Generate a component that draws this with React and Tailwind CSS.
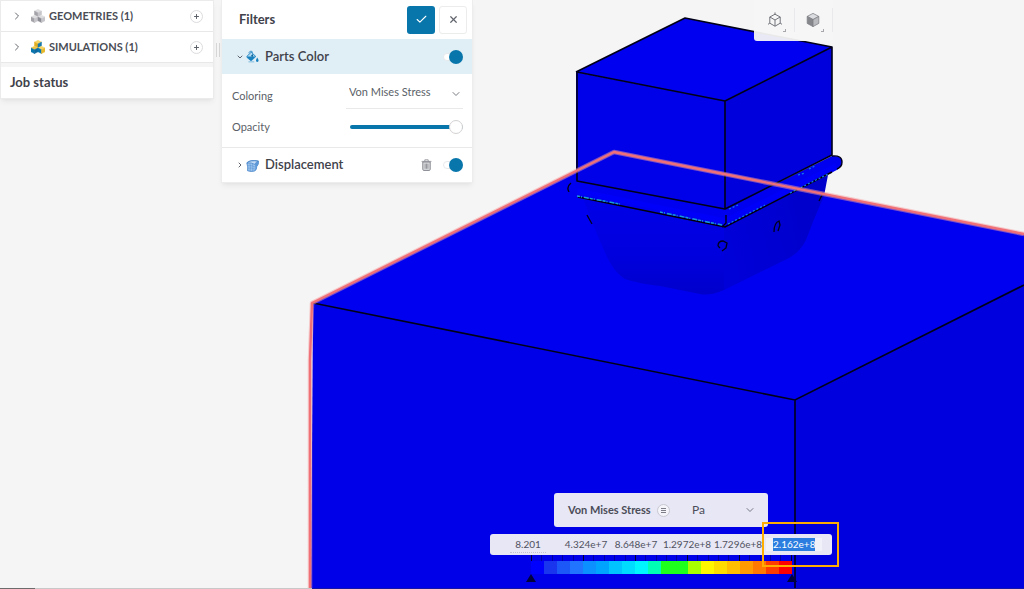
import React from "react";
import { Check, X, ChevronRight, ChevronDown, Plus } from "lucide-react";

const BANDS = [
  "bg-[#0000ff]", "bg-[#1a35ee]", "bg-[#1c58f8]", "bg-[#2074ff]", "bg-[#0c90ff]",
  "bg-[#00a4ff]", "bg-[#00c4ff]", "bg-[#00dcff]", "bg-[#00f6ff]", "bg-[#00ffb4]",
  "bg-[#1eff1e]", "bg-[#1eff1e]", "bg-[#a8ff00]", "bg-[#fff600]", "bg-[#ffdc00]",
  "bg-[#ffbe00]", "bg-[#ff9a00]", "bg-[#ff7800]", "bg-[#ff3c00]", "bg-[#ff0000]",
];

function Model() {
  return (
    <svg
      className="absolute inset-0 h-full w-full"
      viewBox="0 0 1024 589"
      preserveAspectRatio="xMidYMid slice"
      role="img"
      aria-label="Stress result on the model"
    >
      <defs>
        <linearGradient id="cup" x1="0" y1="0" x2="0" y2="1">
          <stop offset="0" stopColor="#0000e8" />
          <stop offset="0.6" stopColor="#0000de" />
          <stop offset="1" stopColor="#0000cc" />
        </linearGradient>
        <linearGradient id="cupSide" gradientUnits="userSpaceOnUse" x1="712" y1="250" x2="806" y2="230">
          <stop offset="0" stopColor="#0000da" />
          <stop offset="0.7" stopColor="#0000d2" />
          <stop offset="1" stopColor="#0000cc" />
        </linearGradient>
      </defs>
      <path d="M614 152 1024 234V285L795 400 313 303Z" fill="#0000f0" />
      <path d="M313 303 795 400V589H311Z" fill="#0000e8" />
      <path d="M795 400 1024 285V589H795Z" fill="#0000de" />
      <path d="M313 303 795 400 1024 285M795 400V589" fill="none" stroke="#000018" strokeWidth="1.6" />

      <path d="M582 196Q594 228 604 250Q613 272 625 279Q640 284 660 286L700 294Q710 296 724 290V222Z" fill="url(#cup)" />
      <path d="M724 222 828 175 824 196Q814 218 806 240Q799 254 785 260L724 290Z" fill="url(#cupSide)" />
      <path d="M577 181 725 209 832 156Q842 155 842 162Q842 168 833 172L725 227 577 197Q568 193 569 187Q571 182 577 181Z" fill="#0000f0" />
      <path d="M577 191 725 221 836 166" fill="none" stroke="#0000fa" strokeWidth="5" />
      <path d="M578 197 725 227 832 172" fill="none" stroke="#00000c" strokeWidth="1.5" />
      <path d="M577 196 620 204M660 212 722 225" fill="none" stroke="#189cd4" strokeWidth="1.5" strokeDasharray="3 1 1 2 5 1" />
      <path d="M728 224 765 205M790 193 828 174M798 175 805 173M809 169 815 166M729 209 738 205" fill="none" stroke="#1280e8" strokeWidth="1.2" strokeDasharray="2 2" />
      <path d="M571 183Q566 187 569 192M832 156Q842 155 842 162Q842 167 837 169M726 215V223L722 227" fill="none" stroke="#000018" strokeWidth="1.4" />
      <path d="M587 215 592 224M819 201 823 193M774 232Q774 223 779 221L780 225 778 231M718 246Q718 241 723 241L727 243 726 248 722 251M718 246 720 248" fill="none" stroke="#000018" strokeWidth="1.3" />

      <path d="M685 18 832 47 725 101 576 72Z" fill="#0000f0" />
      <path d="M576 72 725 101V209L576 181Z" fill="#0000e9" />
      <path d="M725 101 832 47V155L725 209Z" fill="#0000dc" />
      <path d="M576 72 685 18 832 47V155L725 209 577 181V72L725 101 832 47M725 101V209" fill="none" stroke="#000018" strokeWidth="1.6" strokeLinejoin="round" />
      <path d="M310 589V360L312 303 614 152 1024 234" fill="none" stroke="#f7a0a0" strokeOpacity="0.5" strokeWidth="4.5" strokeLinejoin="round" />
      <path d="M310 589V360L312 303 614 152 1024 234" fill="none" stroke="#f07078" strokeWidth="2.4" strokeLinejoin="round" />
    </svg>
  );
}

function Cubes({ colored }) {
  const cube = (x, y, a, b, c) => (
    <g transform={`translate(${x} ${y})`} strokeLinejoin="round" strokeWidth=".5">
      <path d="M0 1.8 3.5 0 7 1.8 3.5 3.6Z" fill={a} stroke={a} />
      <path d="M0 1.8 3.5 3.6V7.4L0 5.6Z" fill={b} stroke={b} />
      <path d="M7 1.8 3.5 3.6V7.4L7 5.6Z" fill={c} stroke={c} />
    </g>
  );
  return (
    <svg width="14" height="14" viewBox="0 0 14 14" aria-hidden="true">
      {colored ? cube(3.5, 0.3, "#f6d565", "#e2ae20", "#1878ac") : cube(3.5, 0.3, "#dedee0", "#a2a2a8", "#c5c5ca")}
      {colored ? cube(0, 6.2, "#f0c440", "#0876ae", "#0c69a0") : cube(0, 6.2, "#dedee0", "#a2a2a8", "#c5c5ca")}
      {colored ? cube(7, 6.2, "#f6d565", "#0876ae", "#e8b82c") : cube(7, 6.2, "#dedee0", "#8c8c94", "#c5c5ca")}
    </svg>
  );
}

function TreeRow({ label, colored }) {
  return (
    <div className="flex h-[31px] items-center border-b border-[#e8e8e8] bg-white pr-[10px] pl-[10px]">
      <button aria-label={`Expand ${label}`} className="text-[#666a72]">
        <ChevronRight size={12} strokeWidth={2} />
      </button>
      <span className="ml-2"><Cubes colored={colored} /></span>
      <span className="ml-1 flex-1 text-[11px] font-bold text-[#4a4d55]">{label}</span>
      <button aria-label={`Add to ${label}`} className="flex size-[13px] items-center justify-center rounded-full border border-[#dcdcde] text-[#5c6068]">
        <Plus size={7} strokeWidth={3.4} />
      </button>
    </div>
  );
}

function Toggle({ label }) {
  return (
    <label className="relative flex h-4 w-5 items-center">
      <input type="checkbox" role="switch" defaultChecked aria-label={label} className="peer absolute inset-0 appearance-none" />
      <span className="h-2 w-full rounded-full border border-[#e6e9ec] bg-white" />
      <span className="absolute right-0 size-[14px] rounded-full bg-[#0876ab]" />
    </label>
  );
}

function BucketIcon() {
  return (
    <svg width="13" height="13" viewBox="0 0 13 13" aria-hidden="true">
      <path d="M.9 6.4 5.2 2.2 9.8 6.5 5.8 10.3Q5 10.9 4.2 10.2L.9 7.3Q.5 6.8.9 6.4Z" fill="#b5daef" stroke="#2b8bc6" strokeWidth="1" />
      <path d="M1 6.4H9.6L5.5 10.3Q5 10.8 4.5 10.2L1 7.2Z" fill="#1681be" />
      <path d="M2.6 3.2Q3.6.4 6 1.3Q6.8 3 6.5 5.5" fill="none" stroke="#4a9cce" />
      <circle cx="6.2" cy="5.7" r="1" fill="#0d6499" />
      <path d="M11.2 7.6Q12.9 10 12.4 11.2Q11.3 12.8 10.1 11.2Q9.8 9.8 11.2 7.6Z" fill="#1681be" />
      <path d="M2.4 11.8H8.2" stroke="#92c4e2" strokeWidth="1.2" />
    </svg>
  );
}

function DisplacementIcon() {
  return (
    <svg width="13" height="13" viewBox="0 0 13 13" aria-hidden="true">
      <path d="M.8 3.8Q4 .4 12.4 2Q13 5.4 10.8 7.4Q10.8 10.4 8.8 12Q5 13 1.6 11.8Q2.2 8 .8 3.8Z" fill="#9cc3ec" stroke="#3f80c6" strokeWidth=".8" />
      <path d="M1 4Q4 .8 12.2 2.2Q9.4 3.2 9 5.4Q5 3.2 1 4Z" fill="#c4dcf5" stroke="#3f80c6" strokeWidth=".7" />
      <path d="M9 5.4Q10 9 8.8 12Q11 10.2 10.8 7.4Q12.8 5.4 12.3 2.4Q9.4 3.2 9 5.4Z" fill="#5c98d8" />
      <path d="M1.7 6.6Q5 6 9.3 8M1.9 9.2Q5 8.4 9.2 10.2M4 4.2Q4.8 8 4.2 12.2M6.4 4.4Q7.2 8 6.6 12.3" fill="none" stroke="#5d98d8" strokeWidth=".6" />
    </svg>
  );
}

function TrashIcon() {
  return (
    <svg width="11" height="12" viewBox="0 0 11 12" aria-hidden="true">
      <path d="M1.8 3H9.2V10.4Q9.2 11.4 8.2 11.4H2.8Q1.8 11.4 1.8 10.4Z" fill="#dcdddf" stroke="#85888e" strokeWidth="1" />
      <path d="M.6 2.4H10.4M3.8 2.2V.8H7.2V2.2M4.1 4.6V9.8M5.5 4.6V9.8M6.9 4.6V9.8" fill="none" stroke="#85888e" strokeWidth=".8" />
    </svg>
  );
}

function ViewCube({ solid }) {
  return (
    <svg width="16" height="16" viewBox="0 0 16 16" aria-hidden="true">
      {solid ? (
        <g stroke="#808288" strokeWidth=".8" strokeLinejoin="round">
          <path d="M8 1.4 13.8 4.4 8 7.6 2.2 4.4Z" fill="#dcdde0" />
          <path d="M2.2 4.4 8 7.6V14.6L2.2 11.4Z" fill="#85878c" />
          <path d="M13.8 4.4 8 7.6V14.6L13.8 11.4Z" fill="#b8babe" />
        </g>
      ) : (
        <g stroke="#73757b" strokeWidth="1" fill="none" strokeLinejoin="round">
          <path d="M8 2.2 13.2 5V11.2L8 14.2 2.8 11.2V5ZM2.8 5 8 8 13.2 5M8 8V14.2" />
          <path d="M8 .4V2.2M1 12.3 2.8 11.2M15 12.3 13.2 11.2" />
        </g>
      )}
    </svg>
  );
}

function ViewButton({ label, solid }) {
  return (
    <button aria-label={label} className="flex h-6 w-[38px] items-center justify-center border-r border-[#e9e9eb] pl-[2px]">
      <ViewCube solid={solid} />
      <span className="size-[3px] self-end border-r border-b border-[#a8a8ac]" />
    </button>
  );
}

function Pointer() {
  return (
    <svg width="10" height="8" viewBox="0 0 10 8" aria-hidden="true">
      <path d="M5 0 10 8H0Z" fill="#00003c" />
    </svg>
  );
}

function Legend() {
  return (
    <section aria-label="Color legend" className="relative flex w-[342px] flex-col">
      <div className="ml-16 flex h-[34px] w-[214px] items-center rounded-[3px] bg-[#e7e7f5] pr-3 pl-[14px] text-[#4b4d58]">
        <span className="w-[86px] text-[11px] font-bold whitespace-nowrap">Von Mises Stress</span>
        <button aria-label="Legend options" className="ml-[3px] flex size-[13px] items-center justify-center rounded-full border border-[#c8c8d2] bg-[#f4f4fa]">
          <svg width="5" height="5" viewBox="0 0 5 5" aria-hidden="true">
            <path d="M0 .5H5M0 2.5H5M0 4.5H5" stroke="#7c7e88" />
          </svg>
        </button>
        <label className="relative ml-[22px] flex flex-1 items-center">
          <select aria-label="Unit" className="w-full appearance-none bg-transparent text-xs outline-none">
            <option>Pa</option>
          </select>
          <ChevronDown size={12} className="pointer-events-none absolute right-0 text-[#777985]" />
        </label>
      </div>
      <div className="mt-[7px] flex h-[21px] items-center rounded-[3px] bg-[#e7e7f5] text-[10px] text-[#50525e]">
        <input aria-label="Minimum" defaultValue="8.201" className="ml-5 w-9 border-b border-dotted border-[#c3c3d3] bg-transparent text-center outline-none" />
        <span className="ml-[15px] w-[50px] text-center">4.324e+7</span>
        <span className="w-[50px] text-center">8.648e+7</span>
        <span className="w-[52px] text-center">1.2972e+8</span>
        <span className="w-[50px] text-center">1.7296e+8</span>
        <span className="ml-[3px] flex w-14 justify-center bg-[#f1f1fa]">
          <input aria-label="Maximum" defaultValue="2.162e+8" className="h-[13px] w-[42px] bg-[#2b7ee0] text-center text-white outline-none" />
        </span>
      </div>
      <div className="ml-[41px] flex h-[6px] w-[261px] justify-between">
        {Array.from({ length: 26 }, (_, i) => (
          <span key={i} className={i % 5 === 0 ? "w-px bg-[#000030]" : "w-px bg-[#0000a0]"} />
        ))}
      </div>
      <div className="ml-[41px] flex h-[13px] w-[261px]">
        {BANDS.map((band, i) => <span key={i} className={`flex-1 ${band}`} />)}
      </div>
      <div className="ml-9 flex w-[271px] justify-between"><Pointer /><Pointer /></div>
      <div className="pointer-events-none absolute top-[29px] left-[272px] h-[45px] w-[77px] border-2 border-[#ffae00]" />
    </section>
  );
}

export default function App() {
  return (
    <main className="relative flex min-h-screen flex-col justify-between overflow-hidden bg-[#f5f5f5] font-['Lato',sans-serif] text-[#3f424b]">
      <Model />
      <div className="relative flex items-start">
        <aside className="w-[214px] shrink-0 border border-[#ebebeb] shadow-md shadow-black/5">
          <TreeRow label="GEOMETRIES (1)" />
          <TreeRow label="SIMULATIONS (1)" colored />
          <h2 className="mt-1 flex h-[31px] items-center bg-white pl-[9px] text-[13px] font-bold">Job status</h2>
        </aside>
        <div className="mt-[43px] flex h-[14px] w-[7px] shrink-0 justify-center gap-[2px]">
          <span className="w-px bg-[#d6d6d6]" />
          <span className="w-px bg-[#d6d6d6]" />
        </div>
        <section aria-label="Filters" className="w-[252px] shrink-0 border border-t-0 border-[#ededed] bg-white shadow-md shadow-black/5">
          <header className="flex h-[39px] items-center pr-[5px] pl-[17px]">
            <h2 className="flex-1 text-[13px] font-bold">Filters</h2>
            <button aria-label="Apply" className="flex size-7 items-center justify-center rounded-[3px] bg-[#0876ab] text-white">
              <Check size={13} />
            </button>
            <button aria-label="Close" className="ml-1 flex size-7 items-center justify-center rounded-[3px] border border-[#ececec] text-[#60646c]">
              <X size={11} strokeWidth={2.6} />
            </button>
          </header>
          <div className="flex h-[35px] items-center bg-[#e0eef6] pr-[9px] pl-[14px]">
            <button aria-label="Collapse Parts Color" className="text-[#60646c]"><ChevronDown size={8} strokeWidth={3} /></button>
            <span className="ml-[2px]"><BucketIcon /></span>
            <h3 className="ml-[6px] flex-1 text-[13px] font-semibold">Parts Color</h3>
            <Toggle label="Parts Color" />
          </div>
          <div className="flex h-[74px] flex-col border-b border-[#e9e9e9] pr-[9px] pl-[10px] text-[11px] text-[#5b5f68]">
            <div className="flex h-[35px] items-end justify-between">
              <label htmlFor="coloring" className="pb-[5px]">Coloring</label>
              <div className="relative flex h-[30px] w-[117px] items-center border-b border-[#e9e9e9]">
                <select id="coloring" className="h-6 w-full appearance-none bg-transparent pb-[2px] pl-[3px] outline-none">
                  <option>Von Mises Stress</option>
                </select>
                <ChevronDown size={12} className="pointer-events-none absolute right-[1px] text-[#777b83]" />
              </div>
            </div>
            <div className="flex h-9 items-center justify-between">
              <label htmlFor="opacity">Opacity</label>
              <input
                id="opacity"
                type="range"
                defaultValue="100"
                className="h-4 w-[113px] appearance-none bg-transparent [&::-webkit-slider-runnable-track]:h-1 [&::-webkit-slider-runnable-track]:rounded-full [&::-webkit-slider-runnable-track]:bg-[#0876ab] [&::-webkit-slider-thumb]:-mt-[5px] [&::-webkit-slider-thumb]:size-[14px] [&::-webkit-slider-thumb]:appearance-none [&::-webkit-slider-thumb]:rounded-full [&::-webkit-slider-thumb]:border [&::-webkit-slider-thumb]:border-[#d2d2d2] [&::-webkit-slider-thumb]:bg-white"
              />
            </div>
          </div>
          <div className="flex h-[34px] items-center pr-[9px] pl-[14px]">
            <button aria-label="Expand Displacement" className="text-[#60646c]"><ChevronRight size={8} strokeWidth={3} /></button>
            <span className="ml-[2px]"><DisplacementIcon /></span>
            <h3 className="ml-[6px] flex-1 text-[13px] font-semibold">Displacement</h3>
            <button aria-label="Delete Displacement" className="mr-[11px]"><TrashIcon /></button>
            <Toggle label="Displacement" />
          </div>
        </section>
        <nav aria-label="View" className="ml-[281px] flex h-[41px] rounded-b-[3px] bg-[#f5f5f5]/95 pt-2 pl-[3px]">
          <ViewButton label="Projection" />
          <ViewButton label="Render mode" solid />
        </nav>
      </div>
      <div className="relative flex justify-end pr-48 pb-[7px]">
        <Legend />
      </div>
      <div className="absolute inset-x-0 bottom-0 flex h-px bg-[#c8c8c8]">
        <span className="w-[35px] bg-[#6c6c6c]" />
        <span className="ml-[277px] flex-1 bg-[#1414a8]" />
      </div>
    </main>
  );
}
